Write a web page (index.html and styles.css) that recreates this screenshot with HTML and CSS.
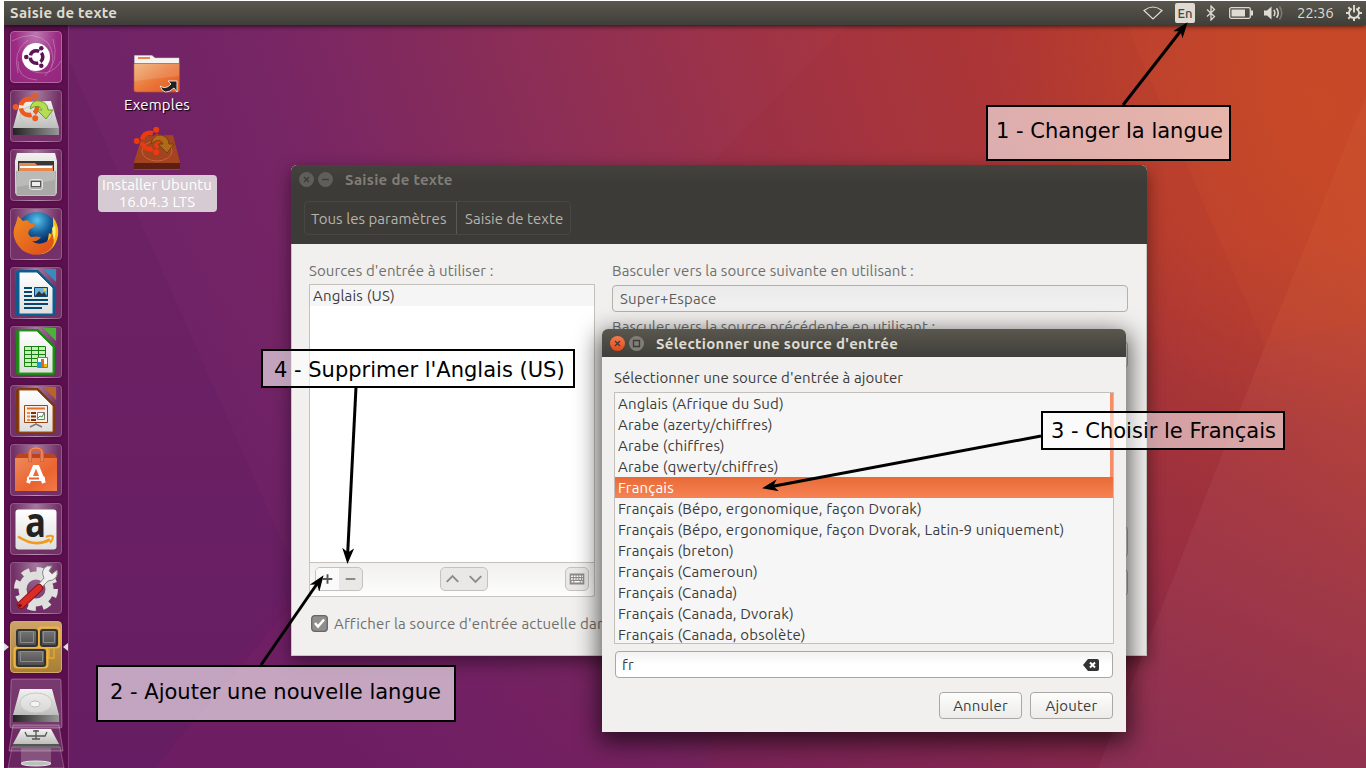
FILE: index.html
```
<!DOCTYPE html>
<html lang="fr">
<head>
<meta charset="utf-8">
<title>Saisie de texte</title>
<link rel="stylesheet" href="styles.css">
</head>
<body>
<svg class="defs" width="0" height="0">
  <defs>
    <linearGradient id="metal" x2="0" y2="1"><stop stop-color="#f2f2f0"/><stop offset="1" stop-color="#bdbdbb"/></linearGradient>
    <linearGradient id="dark" x2="1" y2="0"><stop stop-color="#222"/><stop offset="1" stop-color="#999"/></linearGradient>
    <linearGradient id="folder" x2="1" y2="1"><stop stop-color="#efb077"/><stop offset=".5" stop-color="#ea7a3c"/><stop offset="1" stop-color="#e4561f"/></linearGradient>
    <linearGradient id="paper" x2="0" y2="1"><stop stop-color="#fff"/><stop offset="1" stop-color="#dedede"/></linearGradient>
    <linearGradient id="fox" x2="1" y2="1"><stop stop-color="#f08a24"/><stop offset="1" stop-color="#dc4a18"/></linearGradient>
    <radialGradient id="globe" cx=".5" cy=".2"><stop stop-color="#5cc3ec"/><stop offset=".6" stop-color="#17639f"/><stop offset="1" stop-color="#0a2f66"/></radialGradient>
    <linearGradient id="bag" x2="1" y2="1"><stop stop-color="#ee8a5a"/><stop offset=".6" stop-color="#ea6430"/><stop offset="1" stop-color="#f07a48"/></linearGradient>
    <linearGradient id="key" x2="0" y2="1"><stop stop-color="#777"/><stop offset="1" stop-color="#4d4d4d"/></linearGradient>
    <marker id="head" viewBox="0 0 16 12" refX="15" refY="6" markerWidth="16" markerHeight="12" markerUnits="userSpaceOnUse" orient="auto"><path d="M0 0 16 6 0 12 4.500 6z"/></marker>
    <g id="cof">
      <circle r="10.500" fill="none" stroke="currentColor" stroke-width="6" stroke-dasharray="18 4" stroke-dashoffset="9"/>
      <circle cx="-17" cy="0" r="3.800" fill="currentColor"/><circle cx="8" cy="-14.500" r="3.800" fill="currentColor"/><circle cx="8" cy="14.500" r="3.800" fill="currentColor"/>
    </g>
  </defs>
</svg>

<main class="screen">
  <svg class="wallpaper" viewBox="0 0 1362 767" preserveAspectRatio="none">
    <defs>
      <linearGradient id="base" gradientUnits="userSpaceOnUse" x1="220" y1="400" x2="1300" y2="60">
        <stop stop-color="#702367"/><stop offset=".14" stop-color="#782664"/><stop offset=".35" stop-color="#8c2e56"/><stop offset=".6" stop-color="#a43542"/><stop offset=".8" stop-color="#b33b33"/><stop offset="1" stop-color="#c2462b"/>
      </linearGradient>
      <linearGradient id="low" x2="0" y2="1"><stop offset=".3" stop-color="#6a1e60" stop-opacity="0"/><stop offset="1" stop-color="#641b62" stop-opacity=".52"/></linearGradient>
      <radialGradient id="sun" gradientUnits="userSpaceOnUse" cx="1315" cy="105" r="320"><stop stop-color="#ca4a26" stop-opacity=".7"/><stop offset="1" stop-color="#ca4a26" stop-opacity="0"/></radialGradient>
    </defs>
    <rect width="1362" height="767" fill="url(#base)"/>
    <rect width="1362" height="767" fill="url(#low)"/>
    <rect width="1362" height="767" fill="url(#sun)"/>
    <path d="M848 20 704 166 704 767H1094L1261 345 1121 20z" fill="#9c1c28" opacity=".09"/>
    <path d="M1362 95 1261 345 1362 320z" fill="#f08050" opacity=".1"/>
    <path d="M1261 345 1094 767H1362V320z" fill="#f0a0a0" opacity=".06"/>
    <path d="M65 60 300 590 151 767H65z" fill="#45104a" opacity=".08"/>
    <path d="M151 767 300 570 700 767z" fill="#a01868" opacity=".07"/>
  </svg>

  <header class="panel">
    <span class="panel-title">Saisie de texte</span>
    <div class="tray">
      <svg class="wifi" width="20" height="14" viewBox="0 0 20 14"><path d="M1 4.500Q10-2.500 19 4.500L10 13z" fill="none" stroke="#dfdbd2" stroke-width="1.200"/></svg>
      <span class="lang">En</span>
      <svg class="bt" width="10" height="16" viewBox="0 0 10 16"><path d="M1 4.500 8.500 11.500 5 15V1l3.500 3.500L1 11.500" fill="none" stroke="#dfdbd2" stroke-width="1.300"/></svg>
      <svg class="batt" width="24" height="12" viewBox="0 0 24 12"><rect x=".7" y=".7" width="20.600" height="10.600" rx="1.500" fill="none" stroke="#dfdbd2" stroke-width="1.300"/><path d="M2.500 2.500H16v7H2.500z" fill="#dfdbd2"/><path d="M22 3.500h2v5h-2z" fill="#dfdbd2"/></svg>
      <svg class="vol" width="20" height="16" viewBox="0 0 20 16"><path d="M0 5.500H3L7.500 1.500V14.500L3 10.500H0z" fill="#dfdbd2"/><g fill="none" stroke="#dfdbd2" stroke-width="1.500"><path d="M9.800 5Q12 8 9.800 11M12.500 3.200Q16 8 12.500 12.800"/><path d="M15.500 1.500Q20 8 15.500 14.500" opacity=".35"/></g></svg>
      <span class="clock">22:36</span>
      <svg class="gear" width="16" height="16" viewBox="0 0 16 16"><g fill="none" stroke="#dfdbd2"><path d="M5.700 3.600a5 5 0 1 0 4.600 0" stroke-width="1.900"/><path d="M8 0V7.500" stroke-width="1.900"/><path d="M8 13v3M0 8h3m10 0h3M2.300 2.300l2 2m7.400 0 2-2M2.300 13.700l2-2m7.400 0 2 2" stroke-width="2"/></g></svg>
    </div>
  </header>

  <nav class="launcher">
    <div class="tile dash"><svg viewBox="0 0 52 52"><g fill="none" stroke="#e6b9dc" opacity=".4"><path d="M2 10Q24-2 38 12 46 24 41 37"/><path d="M8 30Q7 48 27 49"/><path d="M51 30Q40 48 20 39"/><path d="M8 42Q2 20 18 9"/><path d="M35 45Q50 30 43 8"/></g><circle cx="26" cy="26" r="14" fill="#fff"/><g color="#5e1456" transform="translate(26.500 26) scale(.6)"><use href="#cof"/></g></svg></div>
    <div class="tile"><svg viewBox="0 0 52 52"><path d="M10 12 41 11 49 38H3z" fill="url(#metal)"/><path d="M3 38h46v7H3z" fill="url(#dark)"/><ellipse cx="26" cy="26" rx="16" ry="10.500" fill="none" stroke="#c4c4c4"/><g color="#ee5a1c" transform="translate(19 17) scale(.78)"><use href="#cof"/></g><path d="M20 19Q22 9 30 11 38 13 38 20h5L36 29 27 20h5Q29 13 20 19z" fill="#b5dc55" stroke="#6f9d1d"/></svg></div>
    <div class="tile"><svg viewBox="0 0 52 52"><path d="M7 4H45L47 12V44L45 47H7L5 44V12z" fill="url(#metal)"/><path d="M8 12H44V24H8z" fill="#3a3634"/><path d="M9 14h16l2 2h16v7H9z" fill="#e9884d"/><path d="M10 17h32v2H10z" fill="#fff"/><path d="M6 22H46L45 46H7z" fill="#a9a9a7"/><path d="M7 22H45V31L7 38z" fill="#fff" opacity=".2"/><rect x="19.500" y="30.500" width="13" height="10" rx="2" fill="#aaa" stroke="#e6e6e6"/><rect x="21.500" y="32.500" width="9" height="5" fill="#eee" stroke="#555"/></svg></div>
    <div class="tile"><svg viewBox="0 0 52 52"><circle cx="27" cy="25" r="21" fill="url(#globe)"/><path d="M43 9Q53 23 44 38 36 48 27 46 38 39 39 25 44 29 43 18z" fill="#f9b916"/><path d="M45 17Q48 32 36 42 44 27 42 20z" fill="#fff06a"/><path d="M8 8 13 13Q19 11 20 15L25 16 24 19 20 21Q16 26 21 29 27 28 31 29 28 34 22 33 28 38 36 34 43 30 41 22 48 36 38 43 25 51 12 42-1 29 6 15z" fill="url(#fox)"/></svg></div>
    <div class="tile"><svg viewBox="0 0 52 52"><path d="M9 3H28L45 20V47L43 49H8L6 47V5z" fill="#0d5a8d"/><path d="M9 5H27L43 21V47H9z" fill="url(#paper)" stroke="#0b6396"/><path d="M33 2H46V15z" fill="#3b8abd"/><path d="M14 21h8m-8 4h8m-8 4h8m-8 4h24m-24 4h24m-24 4h18" stroke="#05456e" stroke-width="2"/><path d="M24.500 20.500h13v9h-13z" fill="#6bb5df" stroke="#07466e"/><path d="M25 29l4-5 3 3 2-2 3 4z" fill="#333"/><circle cx="35" cy="22.500" r="1.500" fill="#ffd43b"/></svg></div>
    <div class="tile"><svg viewBox="0 0 52 52"><path d="M9 3H28L45 20V47L43 49H8L6 47V5z" fill="#1e8517"/><path d="M9 5H27L43 21V47H9z" fill="url(#paper)" stroke="#269c1b"/><path d="M33 2H46V15z" fill="#4ab23c"/><path d="M14 21h22v19H14z" fill="#c7f0b9"/><path d="M14.500 20.500h21v20h-21zM14 24.500h22m-22 4h22m-22 4h22m-22 4h22M21.500 20v20m7-20v20" fill="none" stroke="#188011"/><path d="M27.500 31.500h10v10h-10z" fill="#fff" stroke="#777"/><path d="M28 36h3v5h-3z" fill="#189cda"/><path d="M31 33h3v8h-3z" fill="#d76a28"/><path d="M34 38h3v3h-3z" fill="#e9bd18"/></svg></div>
    <div class="tile"><svg viewBox="0 0 52 52"><path d="M9 3H28L45 20V47L43 49H8L6 47V5z" fill="#7b360d"/><path d="M9 5H27L43 21V47H9z" fill="url(#paper)" stroke="#a24c17"/><path d="M33 2H46V15z" fill="#bc6228"/><path d="M14.500 20.500h23v17h-23z" fill="#fbeee6" stroke="#9b4511"/><path d="M17 23.500h18" stroke="#e27227" stroke-width="2"/><path d="M17 28h3m-3 3.500h3m-3 3.500h3" stroke="#e88c51" stroke-width="2"/><path d="M21 28h5m-5 3.500h5m-5 3.500h5" stroke="#773210" stroke-width="2"/><path d="M27.500 27.500h7v7h-7z" fill="#fff" stroke="#777"/><path d="M28 33l2-2 2 1 2-4" fill="none" stroke="#18a12c"/><path d="M26 38v2m-6 2 6-3 6 3" fill="none" stroke="#777" stroke-width="1.500"/></svg></div>
    <div class="tile"><svg viewBox="0 0 52 52"><path d="M5 14 8 10H44L47 14z" fill="#b9441d"/><path d="M5 14H47V47H5z" fill="url(#bag)"/><path d="M20 18V9Q20 5 26 5T32 9V18" fill="none" stroke="#dc6338" stroke-width="4"/><path d="M20 17V9Q20 4 26 4T32 9V17" fill="none" stroke="#f2a37d"/><path d="M18 39 24.500 23H27.500L34 39" fill="none" stroke="#fff" stroke-width="4"/><rect x="17" y="32" width="18" height="5" rx="2.500" fill="#fff"/><path d="M19 34.500h10" stroke="#ec6230" stroke-width="2"/></svg></div>
    <div class="tile"><svg viewBox="0 0 52 52"><rect x="5.500" y="6.500" width="41" height="40" rx="3" fill="url(#paper)"/><text class="amazon" x="15" y="33.500" textLength="21" lengthAdjust="spacingAndGlyphs">a</text><path d="M8 33.500Q25 45 40 36.500" fill="none" stroke="#f49a1a" stroke-width="2.600"/><path d="M36 34Q40 32 43 33.500 43 37 40 40" fill="none" stroke="#f49a1a" stroke-width="2"/></svg></div>
    <div class="tile"><svg viewBox="0 0 52 52"><circle cx="26" cy="27" r="19" fill="none" stroke="#e0e0de" stroke-width="6" stroke-dasharray="8 6.920"/><circle cx="26" cy="27" r="13.500" fill="none" stroke="#dededc" stroke-width="8"/><path d="M27 24 34 16Q30 8 37 4L42 4 39 9 42 12 47 8Q49 18 38 19L30 27z" fill="#efefef" stroke="#8a8a8a"/><path d="M29 26 11 43" stroke="#8c1414" stroke-width="8" stroke-linecap="round"/><path d="M29 26 11 43" stroke="#d92c29" stroke-width="6" stroke-linecap="round"/><circle cx="10" cy="43.500" r="1.800" fill="#75100e"/></svg></div>
    <div class="tile running"><svg viewBox="0 0 52 52"><path d="M39 27v9h-4m9-9v10h-9" fill="none" stroke="#dda02a" stroke-width="2"/><rect x="4.500" y="26.500" width="33" height="20" rx="3" fill="none" stroke="#f0b53c" stroke-width="2"/><rect x="28.500" y="6.500" width="21" height="20" rx="3" fill="none" stroke="#f0b53c" stroke-width="2"/><g fill="url(#key)" stroke="#333" stroke-width="2"><rect x="7" y="9" width="20" height="16" rx="2"/><rect x="31" y="9" width="16" height="16" rx="2"/><rect x="7" y="29" width="28" height="16" rx="2"/></g><g fill="none" stroke="#8b8b8b"><path d="M10.500 10.500h13v11h-13zM33.500 10.500h11v11h-11zM10.500 30.500h22v10h-22z"/></g></svg></div>
    <svg class="folded" width="65" height="91" viewBox="0 0 65 91">
      <path d="M7 3Q7 1 9 1H55Q57 1 57 3L58 48Q58 50 56 50H8Q6 50 6 48z" fill="#fff" fill-opacity=".18" stroke="#fff" stroke-opacity=".3"/>
      <path d="M16 11H48L55 37H9z" fill="url(#metal)"/><path d="M9 37h46v7H9z" fill="url(#dark)"/><ellipse cx="32" cy="25" rx="16" ry="10" fill="#eee" fill-opacity=".5" stroke="#c8c8c8"/><ellipse cx="31" cy="26" rx="5" ry="3" fill="#f4f4f4" stroke="#bbb"/>
      <path d="M9 47H55L59 73H5z" fill="#fff" fill-opacity=".13" stroke="#fff" stroke-opacity=".3"/>
      <path d="M17 51H47L55 66H9z" fill="url(#metal)"/><path d="M9 66h46v3H9z" fill="#555"/><path d="M21 54l2 4h18l2-4M32 52v9m-3-8h6m-7 8h8" fill="none" stroke="#555" stroke-width="1.300"/>
      <path d="M8 69 4 90H60L56 69z" fill="#fff" fill-opacity=".1" stroke="#fff" stroke-opacity=".25"/>
      <path d="M17 70H47V85H17z" fill="#ddd" opacity=".25"/><ellipse cx="32" cy="85.500" rx="15" ry="2.500" fill="#b8c2ba" stroke="#e8e8e8"/>
    </svg>
  </nav>

  <section class="desktop-icons">
    <figure class="shortcut">
      <svg width="48" height="40" viewBox="0 0 48 40"><path d="M1.500 1.500H19L22 4H46V14H1.500z" fill="#f6f3f0" stroke="#ccc" stroke-width=".5"/><path d="M5 4h12" stroke="#e7874b" stroke-width="2"/><path d="M1 9.500H46.500V36Q46.500 38 44.500 38H3Q1 38 1 36z" fill="url(#folder)" stroke="#b85425" stroke-width=".7"/><path d="M1 10H46V22L1 27z" fill="#fff" opacity=".13"/><path d="M27 32Q33 36 38 30L35 27H44V38L41 34Q31 43 27 32z" fill="#231f20" stroke="#eee" stroke-width=".9"/></svg>
      <figcaption>Exemples</figcaption>
    </figure>
    <figure class="shortcut selected">
      <svg width="48" height="46" viewBox="0 0 48 46"><path d="M9 10 40 9 47 36V44H1V36z" fill="#a34320"/><path d="M1 37h46v6H1z" fill="#5d1f10"/><ellipse cx="24" cy="25" rx="15" ry="10" fill="none" stroke="#c5653d"/><g color="#e93a10" transform="translate(17 15) scale(.78)"><use href="#cof"/></g><path d="M18 18Q20 8 28 9 36 11 36 18h5L34 27 25 18h5Q27 11 18 18z" fill="#b06a18" stroke="#74400c"/></svg>
      <figcaption>Installer Ubuntu<br>16.04.3 LTS</figcaption>
    </figure>
  </section>

  <section class="window settings">
    <header class="settings-head">
      <div class="titlebar"><i class="ctl"><svg viewBox="0 0 15 15"><path d="m5 5 5 5m0-5-5 5"/></svg></i><i class="ctl"><svg viewBox="0 0 15 15"><path d="M4 7.500h7"/></svg></i><b>Saisie de texte</b></div>
      <div class="crumbs"><span class="crumb-all">Tous les paramètres</span><span>Saisie de texte</span></div>
    </header>
    <div class="settings-body">
      <div class="sources">
        <label class="src-label">Sources d'entrée à utiliser :</label>
        <div class="source-list"><div class="source">Anglais (US)</div></div>
        <div class="toolbar">
          <div class="btns"><button class="on"><svg viewBox="0 0 24 22"><path d="M12 6v10M7 11h10"/></svg></button><button><svg viewBox="0 0 24 22"><path d="M7 11h10"/></svg></button></div>
          <div class="btns"><button><svg viewBox="0 0 24 22"><path d="m6 14 6-6 6 6"/></svg></button><button><svg viewBox="0 0 24 22"><path d="m6 8 6 6 6-6"/></svg></button></div>
          <div class="btns single"><button><svg viewBox="0 0 24 22"><path d="M4 5h16v12H4z" fill="#8e8b86" stroke="none"/><path d="M5.500 8h13M5.500 11h13" stroke="#fff" stroke-width="1.600" stroke-dasharray="2 1"/><path d="M6 14h2m1 0h6m1 0h2" stroke="#fff" stroke-width="1.600"/></svg></button></div>
        </div>
      </div>
      <div class="switching">
        <label class="next-label">Basculer vers la source suivante en utilisant :</label>
        <div class="entry">Super+Espace</div>
        <label class="prev-label">Basculer vers la source précédente en utilisant :</label>
        <div class="entry"></div>
        <div class="entry option"></div>
        <div class="entry option-last"></div>
      </div>
    </div>
    <div class="show-row"><svg width="17" height="17" viewBox="0 0 17 17"><rect x=".7" y=".7" width="15.600" height="15.600" rx="3" fill="#8f8f8f" stroke="#666" stroke-width="1.300"/><path d="m4 8 3 3.500L13 4.500" fill="none" stroke="#fff" stroke-width="2.500"/></svg><span>Afficher la source d'entrée actuelle dans</span></div>
  </section>

  <section class="window dialog">
    <header class="titlebar active"><i class="ctl close"><svg viewBox="0 0 15 15"><path d="m5 5 5 5m0-5-5 5"/></svg></i><i class="ctl"><svg viewBox="0 0 15 15"><path d="M4.500 4.500h6v6h-6z"/></svg></i><b>Sélectionner une source d'entrée</b></header>
    <div class="dialog-body">
      <label class="add-label">Sélectionner une source d'entrée à ajouter</label>
      <ul class="choices">
        <li>Anglais (Afrique du Sud)</li>
        <li>Arabe (azerty/chiffres)</li>
        <li>Arabe (chiffres)</li>
        <li>Arabe (qwerty/chiffres)</li>
        <li class="chosen">Français</li>
        <li>Français (Bépo, ergonomique, façon Dvorak)</li>
        <li>Français (Bépo, ergonomique, façon Dvorak, Latin-9 uniquement)</li>
        <li>Français (breton)</li>
        <li>Français (Cameroun)</li>
        <li>Français (Canada)</li>
        <li>Français (Canada, Dvorak)</li>
        <li>Français (Canada, obsolète)</li>
      </ul>
      <div class="search"><span>fr</span><svg width="16" height="12" viewBox="0 0 16 12"><path d="M0 6 5 0H14Q16 0 16 2V10Q16 12 14 12H5z" fill="#333"/><path d="m7 3.500 5 5m0-5-5 5" stroke="#fff" stroke-width="2"/></svg></div>
      <div class="actions"><button>Annuler</button><button>Ajouter</button></div>
    </div>
  </section>
</main>

<svg class="arrows" width="1366" height="768" viewBox="0 0 1366 768">
  <g fill="none" stroke="#000" stroke-width="3">
    <path d="M1123 105 1183 28"/><path d="M261 665 319 581"/><path d="M1041 436 769 487"/><path d="M356 387 347.500 557"/>
  </g>
  <g fill="none">
    <path d="M1123 105 1187 23" marker-end="url(#head)"/><path d="M261 665 323 576" marker-end="url(#head)"/><path d="M1041 436 763 488" marker-end="url(#head)"/><path d="M356 387 347.500 563" marker-end="url(#head)"/>
  </g>
</svg>
<div class="note note-lang">1 - Changer la langue</div>
<div class="note note-add">2 - Ajouter une nouvelle langue</div>
<div class="note note-pick">3 - Choisir le Français</div>
<div class="note note-remove">4 - Supprimer l'Anglais (US)</div>
</body>
</html>
```
FILE: styles.css
```
* { box-sizing: border-box; }
body { margin: 0; width: 1366px; height: 768px; overflow: hidden; position: relative; background: #fff; font-family: Ubuntu, "Noto Sans", sans-serif; font-size: 15px; letter-spacing: .18px; color: #3c3c3c; }
.defs { position: absolute; }
button { font: inherit; letter-spacing: inherit; color: inherit; margin: 0; padding: 0; }
.screen { position: absolute; left: 4px; top: 1px; width: 1362px; height: 767px; overflow: hidden; background: #702163; }
.wallpaper { position: absolute; left: 0; top: 0; width: 1362px; height: 767px; }

.panel { position: relative; z-index: 2; height: 24px; display: flex; justify-content: space-between; align-items: center; padding: 0 4px 0 6px; background: linear-gradient(#59574e, #3f3e39); color: #dfdbd2; box-shadow: 0 1px 5px rgba(0,0,0,.75); }
.panel-title { font-weight: bold; letter-spacing: .25px; line-height: 20px; padding-bottom: 1px; }
.tray { display: flex; align-items: center; }
.tray svg { display: block; }
.lang { width: 20px; height: 20px; margin: 0 11px 0 12px; border-radius: 2px; background: #dfdbd2; color: #46453f; font-size: 13px; font-weight: 500; letter-spacing: 0; line-height: 21px; text-align: center; }
.batt { margin-left: 13px; }
.vol { margin-left: 11px; }
.clock { width: 38px; margin: 0 11px 0 13px; padding-bottom: 1px; letter-spacing: -.2px; line-height: 20px; white-space: nowrap; }

.launcher { position: relative; width: 65px; height: 743px; padding: 6px 0 0 6px; background: linear-gradient(#5e104f, #5a0e4e); border-right: 1px solid #813b78; display: flex; flex-direction: column; gap: 7px; }
.tile { flex: none; width: 52px; height: 52px; border-radius: 4px; border: 1px solid rgba(255,255,255,.2); background: radial-gradient(ellipse at 50% 0, rgba(255,255,255,.45), rgba(255,255,255,.14) 65%, rgba(255,255,255,.15)); box-shadow: 0 0 3px rgba(0,0,0,.3); }
.tile svg { display: block; width: 52px; height: 52px; margin: -1px; overflow: visible; }
.tile.dash { background: radial-gradient(ellipse at 50% 0, #bd7ab2, #9c2b83 60%, #93267d); border-color: #b565a6; }
.tile.running { position: relative; background: linear-gradient(#cda467, #a87f33); border-color: #d1aa6b; }
.tile.running::before, .tile.running::after { content: ""; position: absolute; top: 21px; border: 4px solid transparent; }
.tile.running::before { left: -7px; border-left: 5px solid #ddd; border-right: 0; }
.tile.running::after { right: -7px; border-right: 5px solid #ddd; border-left: 0; }
.folded { flex: none; margin: -2px 0 0 -6px; }
.amazon { font: bold 41px "Open Sans", sans-serif; letter-spacing: 0; fill: #222; }

.desktop-icons { position: absolute; left: 93px; top: 53px; width: 120px; display: flex; flex-direction: column; align-items: center; }
.shortcut { margin: 0; display: flex; flex-direction: column; align-items: center; text-align: center; color: #fff; line-height: 17px; }
.shortcut figcaption { margin-top: 2px; text-shadow: 1px 1px 1px #000; }
.shortcut.selected { margin-top: 13px; }
.shortcut.selected figcaption { width: 119px; height: 37px; margin-top: 3px; padding-top: 1px; border-radius: 4px; background: #d6cbd2; text-shadow: none; letter-spacing: .1px; }

.window { position: absolute; background: #f1f0ee; }
.settings { left: 287px; top: 164px; width: 856px; height: 491px; border-radius: 6px 6px 0 0; box-shadow: 0 6px 18px rgba(0,0,0,.45), inset 0 0 0 1px #c9c6c2; color: #6f6f6d; }
.settings-head { height: 79px; border-radius: 6px 6px 0 0; background: linear-gradient(#43423d, #3c3b37 20px); }
.titlebar { display: flex; align-items: center; height: 29px; padding-left: 8px; color: #807d78; }
.titlebar b { margin-left: 8px; letter-spacing: .28px; }
.ctl { width: 15px; height: 15px; margin-right: 4px; border-radius: 50%; background: #6a6963; }
.ctl svg { display: block; width: 15px; height: 15px; fill: none; stroke: #3c3b37; stroke-width: 1.3; }
.settings-head .ctl { background: #5f5e59; }
.crumbs { display: flex; width: 267px; height: 34px; margin: 7px 0 0 13px; border: 1px solid #484743; border-radius: 4px; line-height: 33px; letter-spacing: .05px; color: #b8b4aa; }
.crumbs span { padding-left: 8px; white-space: nowrap; }
.crumbs .crumb-all { width: 152px; padding-left: 6px; border-right: 1px solid #5a5953; }
.settings-body { display: flex; gap: 17px; height: 355px; padding: 17px 18px 0 18px; }
label { display: block; height: 20px; line-height: 20px; letter-spacing: .11px; white-space: nowrap; }
.sources { width: 286px; }
.source-list { height: 279px; margin-top: 3px; border: 1px solid #c4c0bb; background: #fff; color: #3c3c3c; }
.source { height: 21px; line-height: 22px; padding-left: 3px; background: #f5f5f5; }
.toolbar { display: flex; justify-content: space-between; height: 34px; padding: 4px 5px 0; border: 1px solid #c9c6c2; border-top: 0; border-radius: 0 0 3px 3px; background: linear-gradient(#f1f0ee, #fdfdfd); }
.btns { display: flex; height: 24px; border: 1px solid #c4c2be; border-radius: 5px; background: #e9e8e7; overflow: hidden; }
.btns button { width: 23px; height: 22px; border: 0; background: none; }
.btns.single button, .btns.single svg { width: 22px; }
.btns .on { background: #fafafa; }
.btns .on svg { stroke: #555; }
.btns svg { display: block; width: 23px; height: 22px; fill: none; stroke: #8e8b86; stroke-width: 2; }
.switching { width: 516px; padding-left: 0; }
.entry { height: 27px; margin-top: 4px; border: 1px solid #b3b1ad; border-radius: 4px; background: linear-gradient(#ebebeb, #f2f2f2); padding-left: 7px; line-height: 26px; color: #5d5d5b; }
.prev-label { margin-top: 5px; }
.entry.option { height: 31px; margin-top: 158px; }
.entry.option-last { margin-top: 12px; }
.show-row { display: flex; align-items: center; gap: 6px; margin: 14px 0 0 20px; height: 20px; white-space: nowrap; }

.dialog { left: 598px; top: 328px; width: 524px; height: 403px; border-radius: 6px 6px 0 0; box-shadow: 0 7px 24px 3px rgba(0,0,0,.65); }
.titlebar.active { height: 28px; border-radius: 6px 6px 0 0; background: linear-gradient(#59574e, #3f3e39); color: #dfdbd2; }
.titlebar.active .ctl { background: #807e77; }
.titlebar.active .close { background: linear-gradient(#f47b50, #df4a18); }
.dialog-body { padding: 11px 12px 0; }
.dialog-body label { letter-spacing: .08px; }
.choices { position: relative; list-style: none; height: 252px; margin: 4px 0 0; padding: 0; border: 1px solid #c3c0bb; background: #f6f6f6; overflow: hidden; }
.choices::after { content: ""; position: absolute; right: 0; top: 0; width: 3px; height: 84px; background: #f58e66; }
.choices li { height: 21px; line-height: 22px; padding-left: 3px; white-space: nowrap; }
.choices .chosen { background: linear-gradient(#e86b38, #f68253); color: #fff; }
.search { display: flex; justify-content: space-between; align-items: center; height: 27px; margin: 7px 1px 0; padding: 0 13px 0 6px; border: 1px solid #a9a7a3; border-radius: 4px; background: linear-gradient(#f2f2f2, #fff 50%); }
.actions { display: flex; justify-content: flex-end; gap: 8px; margin: 14px 1px 0 0; }
.actions button { width: 83px; height: 27px; border: 1px solid #aaa8a4; border-radius: 4px; background: linear-gradient(#fdfdfd, #ecebe9); line-height: 26px; text-align: center; }

.arrows { position: absolute; left: 0; top: 0; z-index: 3; }
.note { position: absolute; z-index: 4; border: 2px solid #000; background: rgba(255,255,255,.6); color: #000; font-family: "DejaVu Sans", sans-serif; font-size: 21px; letter-spacing: 0; white-space: nowrap; }
.note-lang { left: 986px; top: 105px; width: 245px; height: 56px; line-height: 48px; padding-left: 8px; }
.note-add { left: 96px; top: 665px; width: 360px; height: 57px; line-height: 50px; padding-left: 12px; }
.note-pick { left: 1041px; top: 411px; width: 244px; height: 39px; line-height: 36px; padding-left: 8px; background: rgba(255,255,255,.54); }
.note-remove { left: 261px; top: 349px; width: 314px; height: 39px; line-height: 38px; padding-left: 11px; background: rgba(255,255,255,.58); }
```
